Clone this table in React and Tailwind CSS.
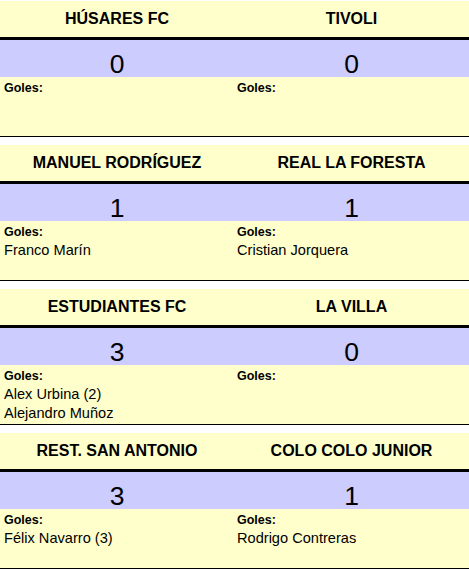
const matches = [
  {
    home: { name: "HÚSARES FC", score: 0, goals: [] },
    away: { name: "TIVOLI", score: 0, goals: [] },
  },
  {
    home: { name: "MANUEL RODRÍGUEZ", score: 1, goals: ["Franco Marín"] },
    away: { name: "REAL LA FORESTA", score: 1, goals: ["Cristian Jorquera"] },
  },
  {
    home: {
      name: "ESTUDIANTES FC",
      score: 3,
      goals: ["Alex Urbina (2)", "Alejandro Muñoz"],
    },
    away: { name: "LA VILLA", score: 0, goals: [] },
  },
  {
    home: { name: "REST. SAN ANTONIO", score: 3, goals: ["Félix Navarro (3)"] },
    away: { name: "COLO COLO JUNIOR", score: 1, goals: ["Rodrigo Contreras"] },
  },
];

function Goals({ list, className }) {
  return (
    <div className={className}>
      <p className="h-[18px] text-[12.5px] font-bold leading-[18px]">Goles:</p>
      {list.map((g) => (
        <p key={g} className="h-[19px] text-[14.6px] leading-[19px]">
          {g}
        </p>
      ))}
    </div>
  );
}

function MatchCard({ home, away }) {
  return (
    <div className="border-b border-black bg-[#ffffcc]">
      <div className="grid h-[39px] grid-cols-[234px_1fr] items-center border-b-[3px] border-black text-center text-[16px] font-bold">
        <span>{home.name}</span>
        <span>{away.name}</span>
      </div>
      <div className="grid h-[37px] grid-cols-[234px_1fr] items-end bg-[#ccccff] text-center text-[26.5px] leading-none">
        <span>{home.score}</span>
        <span>{away.score}</span>
      </div>
      <div className="grid h-[59px] grid-cols-[234px_1fr] pt-[2px]">
        <Goals list={home.goals} className="pl-1" />
        <Goals list={away.goals} className="pl-[3px]" />
      </div>
    </div>
  );
}

export default function App() {
  return (
    <div
      className="flex w-[469px] flex-col gap-[8px] bg-white pt-px text-black"
      style={{ fontFamily: '"Liberation Sans", Arial, sans-serif' }}
    >
      {matches.map((m, i) => (
        <MatchCard key={i} home={m.home} away={m.away} />
      ))}
    </div>
  );
}
